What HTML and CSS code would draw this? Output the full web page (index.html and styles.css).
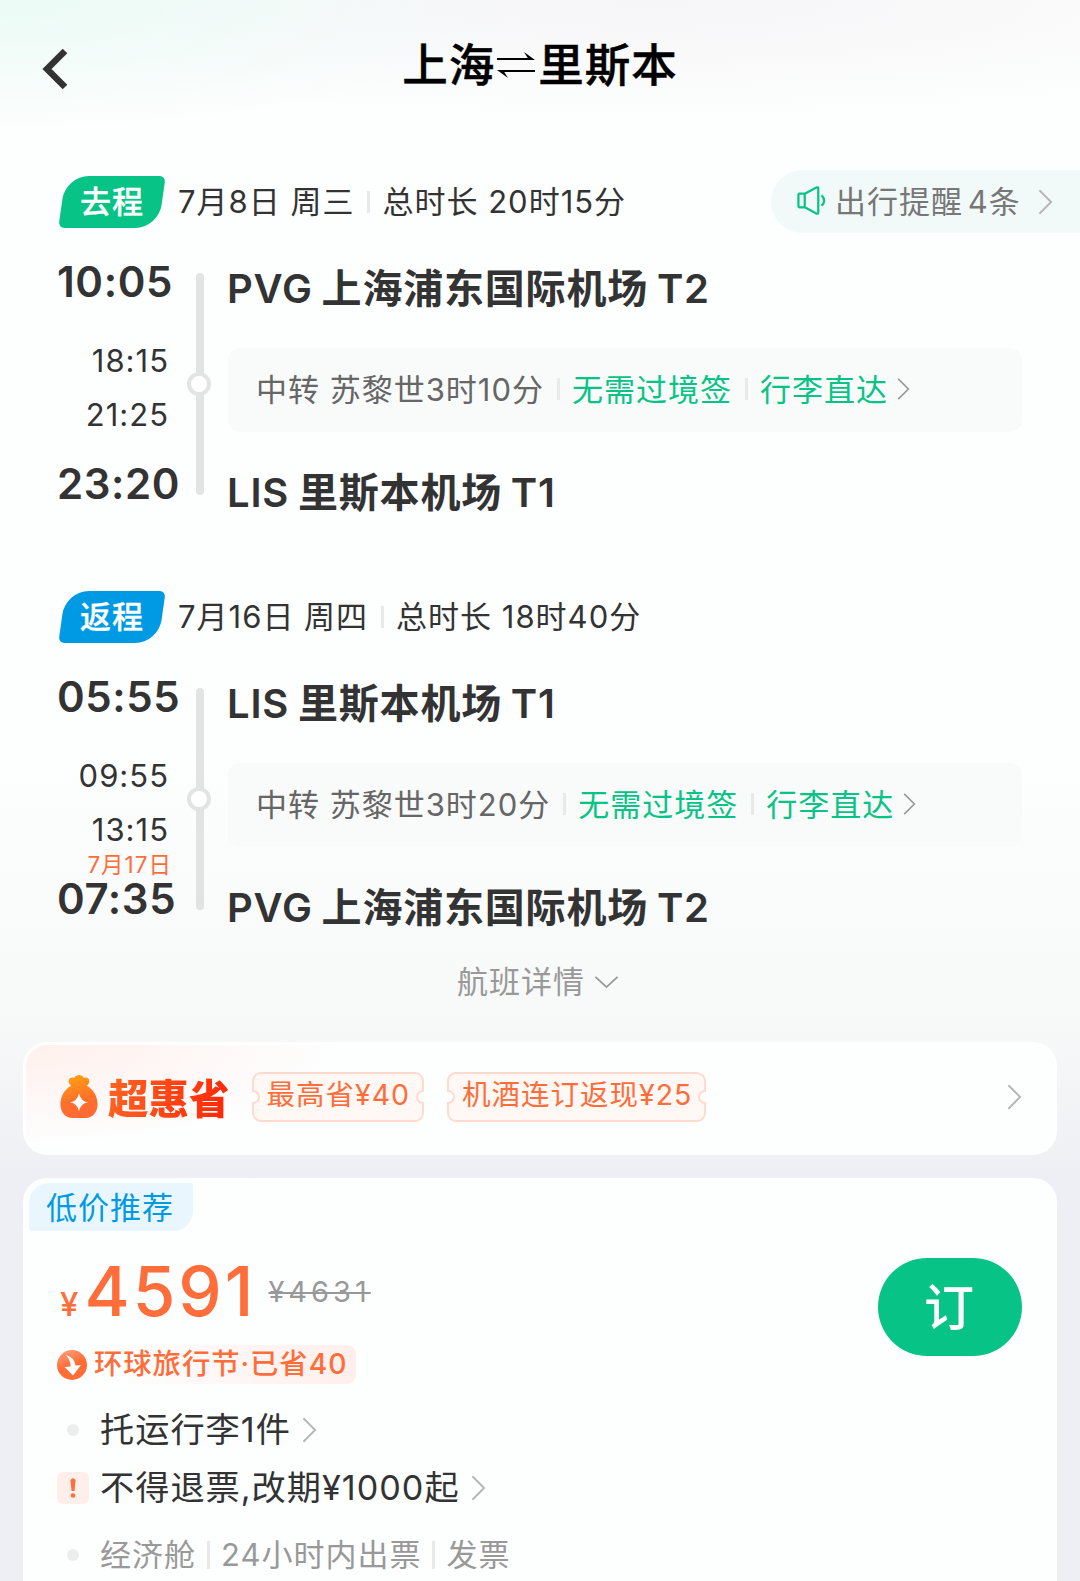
FILE: index.html
```html
<!DOCTYPE html>
<html lang="zh-CN">
<head>
    <meta charset="UTF-8">
    <meta name="viewport" content="width=device-width, initial-scale=1.0">
    <title>上海⇌里斯本</title>
    <link rel="stylesheet" href="styles.css">
</head>
<body>
    <header class="header">
        <svg class="back" viewBox="0 0 30 44"><path d="M25 4 L7 22 L25 40"/></svg>
        <h1>上海<svg class="swap" viewBox="0 0 40 30"><path d="M1 9H36M4 21H39"/><path class="head" d="M28 2L39 10H33ZM12 28L1 20H7Z"/></svg>里斯本</h1>
    </header>

    <main>
        <section class="leg">
            <div class="leg-head">
                <span class="tag">去程</span>
                <span class="date">7月8日 周三</span>
                <i class="sep"></i>
                <span class="total">总时长 20时15分</span>
                <a class="notice">
                    <svg class="horn" viewBox="0 0 30 30"><path d="M8 8H2.5Q1.5 8 1.5 9V21Q1.5 22 2.5 22H8M8 8V22M8 8L20 1.500Q22 0.800 22 2.500V27.500Q22 29.200 20 28.500L8 22M25.500 9.500Q30.500 15 25.500 20.500"/></svg>
                    <span>出行提醒 4条</span>
                    <svg class="arrow" viewBox="0 0 16 28"><path d="M1.500 1.500 L14 14 L1.500 26.500"/></svg>
                </a>
            </div>
            <div class="route">
                <div class="times">
                    <b>10:05</b>
                    <span>18:15</span>
                    <span>21:25</span>
                    <em></em>
                    <b>23:20</b>
                </div>
                <div class="line"></div>
                <div class="stops">
                    <h2>PVG 上海浦东国际机场 T2</h2>
                    <div class="transfer">
                        <span>中转 苏黎世3时10分</span>
                        <i class="sep"></i>
                        <span class="green">无需过境签</span>
                        <i class="sep"></i>
                        <span class="green">行李直达</span>
                        <svg class="arrow small" viewBox="0 0 16 28"><path d="M1.500 1.500 L14 14 L1.500 26.500"/></svg>
                    </div>
                    <h2>LIS 里斯本机场 T1</h2>
                </div>
            </div>
        </section>

        <section class="leg">
            <div class="leg-head">
                <span class="tag blue">返程</span>
                <span class="date">7月16日 周四</span>
                <i class="sep"></i>
                <span class="total">总时长 18时40分</span>
            </div>
            <div class="route">
                <div class="times">
                    <b>05:55</b>
                    <span>09:55</span>
                    <span>13:15</span>
                    <em>7月17日</em>
                    <b>07:35</b>
                </div>
                <div class="line"></div>
                <div class="stops">
                    <h2>LIS 里斯本机场 T1</h2>
                    <div class="transfer">
                        <span>中转 苏黎世3时20分</span>
                        <i class="sep"></i>
                        <span class="green">无需过境签</span>
                        <i class="sep"></i>
                        <span class="green">行李直达</span>
                        <svg class="arrow small" viewBox="0 0 16 28"><path d="M1.500 1.500 L14 14 L1.500 26.500"/></svg>
                    </div>
                    <h2>PVG 上海浦东国际机场 T2</h2>
                </div>
            </div>
        </section>

        <a class="detail">
            <span>航班详情</span>
            <svg viewBox="0 0 26 13"><path d="M1 1 L13 12 L25 1"/></svg>
        </a>

        <section class="card saving">
            <svg class="bag" viewBox="0 0 38 44">
                <defs>
                    <linearGradient id="bagFill" x1="0.3" y1="0" x2="0.5" y2="1">
                        <stop offset="0" stop-color="#ffa011"/>
                        <stop offset="0.6" stop-color="#ff702b"/>
                        <stop offset="1" stop-color="#ff6a35"/>
                    </linearGradient>
                </defs>
                <path fill="url(#bagFill)" d="M11 11C6 7 9 1 14 3C16 -1 22 -1 24 3C29 1 32 7 27 11C34 15 38 22 38 30C38 39 32 44 26 44H12C6 44 0 39 0 30C0 22 4 15 11 11Z"/>
                <path fill="#fff" d="M19 19Q21 27 28 28Q21 29 19 37Q17 29 10 28Q17 27 19 19Z"/>
            </svg>
            <strong class="brand">超惠省</strong>
            <span class="coupon">最高省¥40</span>
            <span class="coupon">机酒连订返现¥25</span>
            <svg class="arrow" viewBox="0 0 16 28"><path d="M1.500 1.500 L14 14 L1.500 26.500"/></svg>
        </section>

        <section class="card offer">
            <span class="label">低价推荐</span>
            <div class="price-row">
                <span class="yen">¥</span>
                <span class="price">4591</span>
                <del>¥4631</del>
            </div>
            <div class="promo">
                <svg viewBox="0 0 30 30">
                    <defs>
                        <linearGradient id="downFill" x1="0" y1="0" x2="0.4" y2="1">
                            <stop offset="0" stop-color="#ffa585"/>
                            <stop offset="0.6" stop-color="#ff6d35"/>
                        </linearGradient>
                    </defs>
                    <circle cx="15" cy="15" r="15" fill="url(#downFill)"/>
                    <path fill="#fff" d="M9 5Q17 7 18.500 15.500L24 15L16 25.500L7.500 17L13.500 16.500Q14 11 9 5Z"/>
                </svg>
                <span>环球旅行节·已省40</span>
            </div>
            <ul class="rules">
                <li>
                    <i class="dot"></i>
                    <span>托运行李1件</span>
                    <svg class="arrow" viewBox="0 0 16 28"><path d="M1.500 1.500 L14 14 L1.500 26.500"/></svg>
                </li>
                <li>
                    <i class="warn"><svg viewBox="0 0 6 20"><path d="M0.500 2Q3 -1.500 5.500 2L4.500 13H1.500Z"/><circle cx="3" cy="17.500" r="2.300"/></svg></i>
                    <span>不得退票,改期¥1000起</span>
                    <svg class="arrow" viewBox="0 0 16 28"><path d="M1.500 1.500 L14 14 L1.500 26.500"/></svg>
                </li>
                <li class="gray">
                    <i class="dot"></i>
                    <span>经济舱</span>
                    <i class="sep"></i>
                    <span>24小时内出票</span>
                    <i class="sep"></i>
                    <span>发票</span>
                </li>
            </ul>
            <button type="button" class="book">订</button>
        </section>
    </main>
</body>
</html>
```
FILE: styles.css
```css
:root {
    --green: #07c486;
    --blue: #009ae4;
    --orange: #ff6d3a;
    --text: #333;
    --line: #e2e4e3;
}

*,
*::before,
*::after {
    margin: 0;
    padding: 0;
    box-sizing: border-box;
}

body {
    width: 1080px;
    height: 1581px;
    overflow: hidden;
    color: var(--text);
    font-family: Inter, "Noto Sans CJK SC", sans-serif;
    font-size: 31px;
    letter-spacing: 1px;
    line-height: 44px;
    white-space: nowrap;
    background:
        radial-gradient(ellipse 520px 130px at 0 0, #ebfbf6, rgba(255, 255, 255, 0)),
        radial-gradient(ellipse 760px 120px at 650px 0, #f6f5f7, rgba(255, 255, 255, 0)),
        linear-gradient(#fdfefe 0, #fdfefe 750px, #f7f8f8 1030px, #eeeff4 1180px);
}

i, em {
    font-style: normal;
}

svg {
    display: block;
    flex: none;
    overflow: visible;
}

.header {
    position: relative;
    height: 170px;
    padding-top: 36px;
}

.back {
    position: absolute;
    left: 40px;
    top: 47px;
    width: 30px;
    height: 44px;
    fill: none;
    stroke: #333;
    stroke-width: 6.5;
}

h1 {
    display: flex;
    justify-content: center;
    align-items: center;
    height: 60px;
    color: #000;
    font-size: 45.5px;
    font-weight: 500;
    line-height: 60px;
    -webkit-text-stroke: 0.5px #000;
}

.swap {
    width: 40px;
    height: 30px;
    margin: -3px 2px 0 1px;
    fill: none;
    stroke: #000;
    stroke-width: 2;
}

.swap .head {
    fill: #000;
    stroke: none;
}

.leg {
    height: 415px;
    padding-left: 58px;
}

.leg-head {
    display: flex;
    align-items: center;
    height: 64px;
}

.tag {
    position: relative;
    z-index: 0;
    width: 108px;
    height: 52px;
    margin: -1px 12px 0 0;
    color: #fff;
    font-weight: 500;
    line-height: 52px;
    text-align: center;
    -webkit-text-stroke: 0.3px #fff;
}

.tag::before {
    content: "";
    position: absolute;
    z-index: -1;
    inset: 0 4px;
    border-radius: 23px 6px 23px 6px;
    background: var(--green);
    transform: skewX(-8deg);
}

.tag.blue::before {
    background: var(--blue);
}

.sep {
    flex: none;
    width: 3px;
    height: 22px;
    margin: 0 12px 0 13px;
    background: #e8eaea;
}

.notice {
    display: flex;
    align-items: center;
    width: 309px;
    height: 63px;
    margin: -1px 0 0 auto;
    padding-left: 26px;
    border-radius: 32px 0 0 32px;
    background: #f2faf9;
    color: #777;
    word-spacing: -5px;
}

.notice span {
    margin-top: 1px;
}

.horn {
    width: 29px;
    height: 29px;
    margin: -3px 9px 0 0;
    fill: none;
    stroke: var(--green);
    stroke-width: 2.3;
}

.arrow {
    width: 15px;
    height: 28px;
    margin-left: 17px;
    fill: none;
    stroke: #b5b5b5;
    stroke-width: 2;
}

.arrow.small {
    width: 13px;
    height: 24px;
    margin-left: 9px;
    stroke: #999;
}

.route {
    display: grid;
    grid-template-columns: 129px 41px 794px;
}

.times {
    display: flex;
    flex-direction: column;
    padding-top: 18px;
}

.times b {
    height: 60px;
    margin-left: -1px;
    font-size: 42px;
    font-weight: 600;
    letter-spacing: 0.6px;
    line-height: 60px;
}

.times b:last-child {
    height: 52px;
    line-height: 52px;
}

.times span {
    height: 54px;
    padding-right: 18px;
    line-height: 55px;
    text-align: right;
}

.times b + span {
    margin-top: 21px;
}

.times em {
    height: 17px;
    padding-right: 15px;
    color: var(--orange);
    font-size: 22.5px;
    line-height: 18px;
    text-align: right;
}

.line {
    position: relative;
    width: 8px;
    height: 222px;
    margin: 39px 0 0 9px;
    border-radius: 4px;
    background: var(--line);
}

.line::after {
    content: "";
    position: absolute;
    left: -9px;
    top: 99px;
    width: 24px;
    height: 24px;
    border: 4px solid var(--line);
    border-radius: 50%;
    background: #fff;
}

.stops {
    padding-top: 27px;
}

h2 {
    height: 56px;
    margin-left: -1px;
    font-size: 40px;
    font-weight: 600;
    letter-spacing: 0.8px;
    line-height: 56px;
    word-spacing: -2px;
}

.transfer {
    display: flex;
    align-items: center;
    height: 84px;
    margin: 31px 0 33px;
    padding: 0 0 2px 28px;
    border-radius: 12px;
    background: #f9fafa;
    color: #666;
}

.transfer span {
    margin-top: 1px;
}

.green {
    color: var(--green);
}

.detail {
    display: flex;
    align-items: center;
    justify-content: center;
    height: 42px;
    margin: -39px 0 39px;
    color: #999;
}

.detail svg {
    width: 25px;
    height: 12px;
    margin: 0 4px 0 9px;
    fill: none;
    stroke: #999;
    stroke-width: 2;
}

.card {
    width: 1034px;
    margin-left: 23px;
    border-radius: 24px;
    background: #fdfefe;
}

.saving {
    display: flex;
    align-items: center;
    height: 113px;
    padding: 0 32px 4px 34px;
    border: 3px solid #fff;
    background: radial-gradient(ellipse 310px 100px at 0 0, #fff0ed, #fdfefe);
}

.bag {
    width: 38px;
    height: 43px;
}

.brand {
    margin: 0 22px 0 10px;
    font-family: "Noto Sans CJK SC", sans-serif;
    font-size: 40.5px;
    font-weight: 900;
    letter-spacing: 0;
    line-height: 50px;
    color: transparent;
    background: linear-gradient(100deg, #ff6423, #ff2606);
    -webkit-background-clip: text;
    background-clip: text;
}

.coupon {
    position: relative;
    height: 50px;
    margin-right: 23px;
    padding: 0 12px 0 13px;
    border: 2px solid #ffdacf;
    border-radius: 9px;
    background: #fff8f5;
    color: var(--orange);
    font-size: 28.5px;
    line-height: 42px;
}

.coupon::before,
.coupon::after {
    content: "";
    position: absolute;
    top: 16px;
    width: 8px;
    height: 14px;
    border: 2px solid #ffdacf;
    background: #fefefe;
}

.coupon::before {
    left: -2px;
    border-left: 0;
    border-radius: 0 8px 8px 0;
}

.coupon::after {
    right: -2px;
    border-right: 0;
    border-radius: 8px 0 0 8px;
}

.saving .arrow {
    margin-left: auto;
}

.offer {
    position: relative;
    height: 440px;
    margin-top: 23px;
    padding: 5px 0 0 6px;
}

.label {
    display: block;
    width: 164px;
    height: 48px;
    padding-left: 17px;
    border-radius: 20px 3px 20px 3px;
    background: #eaf6fe;
    color: var(--blue);
    line-height: 50px;
}

.price-row {
    display: flex;
    align-items: baseline;
    height: 82px;
    margin: 19px 0 0 31px;
    color: var(--orange);
    line-height: 82px;
}

.yen {
    font-size: 33px;
    font-weight: 500;
}

.price {
    margin-left: 5px;
    font-size: 69px;
    font-weight: 500;
    letter-spacing: 3px;
}

del {
    position: relative;
    top: -14px;
    margin-left: 12px;
    color: #999;
    font-size: 29px;
    letter-spacing: 4px;
    text-decoration-thickness: 2px;
}

.promo {
    display: flex;
    align-items: center;
    width: 299px;
    height: 39px;
    margin: 13px 0 0 28px;
    border-radius: 9px;
    background: linear-gradient(90deg, #fdfefe 20%, #ffefec);
    color: var(--orange);
    font-size: 28.3px;
    font-weight: 500;
}

.promo svg {
    width: 30px;
    height: 30px;
    margin-right: 7px;
}

.promo span {
    line-height: 36px;
    margin-top: -2px;
}

.rules {
    margin-top: 17px;
    list-style: none;
}

.rules li {
    display: flex;
    align-items: center;
    height: 58px;
    padding-left: 28px;
    font-size: 34.2px;
}

.rules .arrow {
    margin-left: 11px;
}

.rules .gray {
    height: 76px;
    color: #999;
    font-size: 31px;
}

.dot {
    width: 12px;
    height: 12px;
    margin: 0 21px 0 10px;
    border-radius: 50%;
    background: #eceeed;
}

.rules .sep {
    height: 28px;
    margin: 0 11px;
}

.warn {
    display: flex;
    align-items: center;
    justify-content: center;
    width: 32px;
    height: 32px;
    margin-right: 11px;
    border-radius: 6px;
    background: #ffefeb;
}

.warn svg {
    width: 6px;
    height: 20px;
    fill: var(--orange);
}

.book {
    position: absolute;
    right: 35px;
    top: 80px;
    width: 144px;
    height: 98px;
    padding: 2px 2px 0 0;
    border: none;
    border-radius: 49px;
    background: var(--green);
    color: #fff;
    font-family: inherit;
    font-size: 50px;
    font-weight: 500;
    line-height: 96px;
    cursor: pointer;
}
```
